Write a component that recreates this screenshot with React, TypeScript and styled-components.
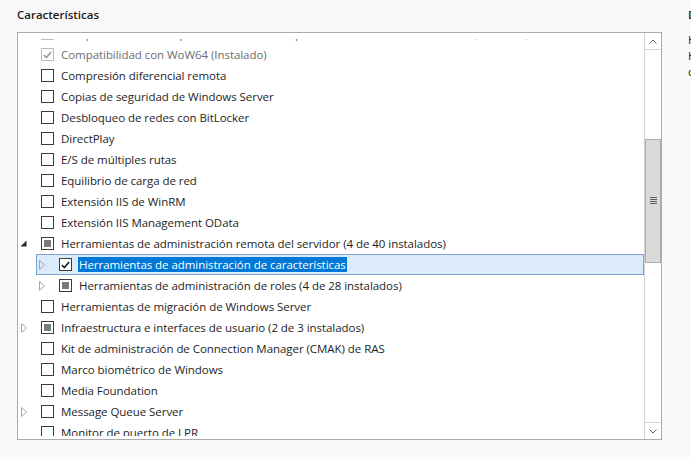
import React from 'react';
import styled, { createGlobalStyle } from 'styled-components';

const GlobalStyle = createGlobalStyle`
  html, body {
    margin: 0;
    padding: 0;
    background: #f9f9f9;
    overflow: hidden;
  }
  body {
    font-family: "Segoe UI", "Open Sans", "Noto Sans", sans-serif;
  }
`;

type CheckState = 'unchecked' | 'checked' | 'indeterminate';
type ExpandState = 'none' | 'collapsed' | 'expanded';

interface Feature {
  label: string;
  level: number;
  check: CheckState;
  expand: ExpandState;
  disabled?: boolean;
  selected?: boolean;
}

const features: Feature[] = [
  { label: 'Compatibilidad con el protocolo de uso compartido de archivos SMB 1.0/CIFS (Instalado)', level: 0, check: 'checked', expand: 'none', disabled: true },
  { label: 'Compatibilidad con WoW64 (Instalado)', level: 0, check: 'checked', expand: 'none', disabled: true },
  { label: 'Compresión diferencial remota', level: 0, check: 'unchecked', expand: 'none' },
  { label: 'Copias de seguridad de Windows Server', level: 0, check: 'unchecked', expand: 'none' },
  { label: 'Desbloqueo de redes con BitLocker', level: 0, check: 'unchecked', expand: 'none' },
  { label: 'DirectPlay', level: 0, check: 'unchecked', expand: 'none' },
  { label: 'E/S de múltiples rutas', level: 0, check: 'unchecked', expand: 'none' },
  { label: 'Equilibrio de carga de red', level: 0, check: 'unchecked', expand: 'none' },
  { label: 'Extensión IIS de WinRM', level: 0, check: 'unchecked', expand: 'none' },
  { label: 'Extensión IIS Management OData', level: 0, check: 'unchecked', expand: 'none' },
  { label: 'Herramientas de administración remota del servidor (4 de 40 instalados)', level: 0, check: 'indeterminate', expand: 'expanded' },
  { label: 'Herramientas de administración de características', level: 1, check: 'checked', expand: 'collapsed', selected: true },
  { label: 'Herramientas de administración de roles (4 de 28 instalados)', level: 1, check: 'indeterminate', expand: 'collapsed' },
  { label: 'Herramientas de migración de Windows Server', level: 0, check: 'unchecked', expand: 'none' },
  { label: 'Infraestructura e interfaces de usuario (2 de 3 instalados)', level: 0, check: 'indeterminate', expand: 'collapsed' },
  { label: 'Kit de administración de Connection Manager (CMAK) de RAS', level: 0, check: 'unchecked', expand: 'none' },
  { label: 'Marco biométrico de Windows', level: 0, check: 'unchecked', expand: 'none' },
  { label: 'Media Foundation', level: 0, check: 'unchecked', expand: 'none' },
  { label: 'Message Queue Server', level: 0, check: 'unchecked', expand: 'collapsed' },
  { label: 'Monitor de puerto de LPR', level: 0, check: 'unchecked', expand: 'none' },
  { label: 'Protocolo de resolución de nombres de mismo nivel', level: 0, check: 'unchecked', expand: 'none' },
];

const Page = styled.div`
  display: flex;
  width: 691px;
  height: 457px;
  overflow: hidden;
  background: #f9f9f9;
  color: #1e1e1e;
  font-size: 11.5px;
`;

const LeftColumn = styled.section`
  flex: none;
  display: flex;
  flex-direction: column;
  width: 645px;
  padding: 5px 0 0 17px;
`;

const SectionTitle = styled.h2`
  margin: 0;
  font-size: 11.5px;
  font-weight: 600;
  line-height: 20px;
  color: #1a1a1a;
  white-space: nowrap;
`;

const ListBox = styled.div`
  margin-top: 7px;
  height: 408px;
  box-sizing: border-box;
  border: 1px solid #acacac;
  background: #ffffff;
  display: flex;
`;

const ListViewport = styled.div`
  flex: 1;
  min-width: 0;
  margin: 6px 0 3px;
  overflow: hidden;
`;

const ListContent = styled.ul`
  list-style: none;
  margin: -16px 0 0;
  padding: 0;
`;

const Row = styled.li<{ $level: number }>`
  display: flex;
  height: 21px;
  padding-left: ${(p) => p.$level * 18}px;
`;

const RowBody = styled.div<{ $selected?: boolean }>`
  flex: 1;
  min-width: 0;
  display: flex;
  align-items: center;
  box-sizing: border-box;
  padding-left: 1px;
  border: 1px solid ${(p) => (p.$selected ? '#7da2ce' : 'transparent')};
  background: ${(p) => (p.$selected ? '#dcebfc' : 'transparent')};
`;

const Expander = styled.span`
  flex: none;
  width: 21px;
  height: 100%;
  display: flex;
  align-items: center;
`;

const Checkbox = styled.span<{ $disabled?: boolean }>`
  flex: none;
  width: 13px;
  height: 13px;
  box-sizing: border-box;
  border: 1px solid ${(p) => (p.$disabled ? '#bcbcbc' : '#3c3c3c')};
  background: #ffffff;
  display: flex;
  align-items: center;
  justify-content: center;
`;

const IndeterminateMark = styled.span`
  width: 7px;
  height: 7px;
  background: #7a7a7a;
`;

const Label = styled.span<{ $disabled?: boolean; $selected?: boolean }>`
  margin-left: 6px;
  padding: 0 1px;
  line-height: 15px;
  white-space: nowrap;
  letter-spacing: -0.05px;
  color: ${(p) => (p.$selected ? '#ffffff' : p.$disabled ? '#6d6d6d' : '#1e1e1e')};
  background: ${(p) => (p.$selected ? '#0078d7' : 'transparent')};
`;

const ScrollBar = styled.div`
  flex: none;
  width: 17px;
  box-sizing: border-box;
  border-left: 1px solid #d4d4d4;
  display: flex;
  flex-direction: column;
  background: #ffffff;
`;

const ScrollButton = styled.div<{ $edge: 'top' | 'bottom' }>`
  flex: none;
  height: 17px;
  box-sizing: border-box;
  ${(p) => (p.$edge === 'top' ? 'border-bottom' : 'border-top')}: 1px solid #d4d4d4;
  display: flex;
  align-items: center;
  justify-content: center;
`;

const ScrollTrack = styled.div`
  flex: 1;
  display: flex;
  flex-direction: column;
`;

const ScrollThumb = styled.div<{ $offset: number; $size: number }>`
  margin-top: ${(p) => p.$offset}px;
  height: ${(p) => p.$size}px;
  box-sizing: border-box;
  border: 1px solid #ababab;
  background: #dadada;
  display: flex;
  align-items: center;
  justify-content: center;
`;

const DescriptionPanel = styled.aside`
  flex: none;
  width: 220px;
  margin-left: 26px;
  padding-top: 5px;
`;

const DescriptionText = styled.p`
  margin: 7px 0 0;
  font-size: 11.5px;
  line-height: 16px;
  color: #1e1e1e;
  white-space: nowrap;
`;

const ExpandedArrow = () => (
  <svg width="7" height="7" viewBox="0 0 7 7">
    <polygon points="6.5,0.5 6.5,6.5 0.5,6.5" fill="#262626" />
  </svg>
);

const CollapsedArrow = () => (
  <svg width="7" height="10" viewBox="0 0 7 10" style={{ marginLeft: 1 }}>
    <polygon points="0.5,0.5 5.5,5 0.5,9.5" fill="none" stroke="#a6a6a6" strokeWidth="1" />
  </svg>
);

const CheckMark = ({ disabled }: { disabled?: boolean }) => (
  <svg width="9" height="8" viewBox="0 0 9 8">
    <polyline
      points="0.8,4 3.3,6.5 8.2,1"
      fill="none"
      stroke={disabled ? '#9a9a9a' : '#1a1a1a'}
      strokeWidth="1.6"
    />
  </svg>
);

const Chevron = ({ dir }: { dir: 'up' | 'down' }) => (
  <svg width="8" height="5" viewBox="0 0 8 5">
    <polyline
      points={dir === 'up' ? '0.5,4.5 4,1 7.5,4.5' : '0.5,0.5 4,4 7.5,0.5'}
      fill="none"
      stroke="#606060"
      strokeWidth="1"
    />
  </svg>
);

const Grip = () => (
  <svg width="7" height="8" viewBox="0 0 7 8">
    {[0, 2, 4, 6].map((y) => (
      <rect key={y} x="0" y={y} width="7" height="1" fill="#606060" />
    ))}
  </svg>
);

const FeatureRow = ({ f }: { f: Feature }) => (
  <Row $level={f.level}>
    <RowBody $selected={f.selected}>
      <Expander>
        {f.expand === 'expanded' && <ExpandedArrow />}
        {f.expand === 'collapsed' && <CollapsedArrow />}
      </Expander>
      <Checkbox $disabled={f.disabled}>
        {f.check === 'checked' && <CheckMark disabled={f.disabled} />}
        {f.check === 'indeterminate' && <IndeterminateMark />}
      </Checkbox>
      <Label $disabled={f.disabled} $selected={f.selected}>
        {f.label}
      </Label>
    </RowBody>
  </Row>
);

export default function App() {
  return (
    <>
      <GlobalStyle />
      <Page>
        <LeftColumn>
          <SectionTitle>Características</SectionTitle>
          <ListBox>
            <ListViewport>
              <ListContent>
                {features.map((f) => (
                  <FeatureRow key={f.label} f={f} />
                ))}
              </ListContent>
            </ListViewport>
            <ScrollBar>
              <ScrollButton $edge="top">
                <Chevron dir="up" />
              </ScrollButton>
              <ScrollTrack>
                <ScrollThumb $offset={89} $size={124}>
                  <Grip />
                </ScrollThumb>
              </ScrollTrack>
              <ScrollButton $edge="bottom">
                <Chevron dir="down" />
              </ScrollButton>
            </ScrollBar>
          </ListBox>
        </LeftColumn>
        <DescriptionPanel>
          <SectionTitle>Descripción</SectionTitle>
          <DescriptionText>
            Herramientas de administración de
            <br />
            Herramientas de administración de características
            <br />
            contiene herramientas para administrar características.
          </DescriptionText>
        </DescriptionPanel>
      </Page>
    </>
  );
}
